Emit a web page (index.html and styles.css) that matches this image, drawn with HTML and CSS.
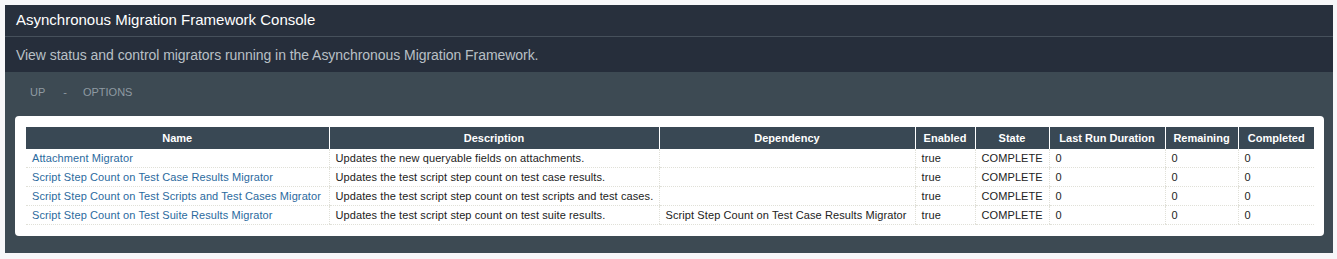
FILE: index.html
```html
<!DOCTYPE html>
<html>
<head>
<meta charset="utf-8">
<link rel="stylesheet" href="styles.css">
</head>
<body>
<div class="console">
  <div class="title-bar">Asynchronous Migration Framework Console</div>
  <div class="subtitle">View status and control migrators running in the Asynchronous Migration Framework.</div>
  <div class="section">
    <div class="nav"><span>UP</span><span class="sep">-</span><span>OPTIONS</span></div>
    <div class="panel">
      <table class="grid">
        <colgroup>
          <col style="width:303px"><col style="width:330px"><col style="width:256px"><col style="width:60px"><col style="width:74px"><col style="width:116px"><col style="width:73px"><col style="width:76px">
        </colgroup>
        <thead>
          <tr><th>Name</th><th>Description</th><th>Dependency</th><th>Enabled</th><th>State</th><th>Last Run Duration</th><th>Remaining</th><th>Completed</th></tr>
        </thead>
        <tbody>
          <tr><td><a>Attachment Migrator</a></td><td>Updates the new queryable fields on attachments.</td><td></td><td>true</td><td>COMPLETE</td><td>0</td><td>0</td><td>0</td></tr>
          <tr><td><a>Script Step Count on Test Case Results Migrator</a></td><td>Updates the test script step count on test case results.</td><td></td><td>true</td><td>COMPLETE</td><td>0</td><td>0</td><td>0</td></tr>
          <tr><td><a>Script Step Count on Test Scripts and Test Cases Migrator</a></td><td>Updates the test script step count on test scripts and test cases.</td><td></td><td>true</td><td>COMPLETE</td><td>0</td><td>0</td><td>0</td></tr>
          <tr><td><a>Script Step Count on Test Suite Results Migrator</a></td><td>Updates the test script step count on test suite results.</td><td>Script Step Count on Test Case Results Migrator</td><td>true</td><td>COMPLETE</td><td>0</td><td>0</td><td>0</td></tr>
        </tbody>
      </table>
    </div>
  </div>
</div>
</body>
</html>
```
FILE: styles.css
```css
html, body {
  margin: 0;
  padding: 0;
  background: #f7f7f9;
}
body {
  padding: 5px 4px 5px 5px;
  font-family: "Liberation Sans", Arial, sans-serif;
}
.console {
  width: 1328px;
  background: #3d4a53;
}
.title-bar {
  height: 32px;
  box-sizing: border-box;
  padding: 6px 0 0 11px;
  background: #28303d;
  color: #ffffff;
  font-size: 15px;
  border-bottom: 1px solid #46505b;
}
.subtitle {
  height: 35px;
  box-sizing: border-box;
  padding: 10px 0 0 11px;
  background: #262e3b;
  color: #b9c0c6;
  font-size: 14px;
  letter-spacing: -0.05px;
}
.section {
  padding: 12px 9px 17px 10px;
}
.nav {
  color: #8f9aa2;
  font-size: 11px;
  padding: 2px 0 0 15px;
  height: 30px;
  display: flex;
}
.nav .sep {
  margin: 0 16px 0 18px;
}
.panel {
  background: #ffffff;
  border-radius: 4px;
  padding: 11px 10px 11px 11px;
}
.grid {
  table-layout: fixed;
  border-collapse: collapse;
  width: 1288px;
  font-size: 11px;
  color: #222222;
}
.grid th {
  background: #394854;
  color: #ffffff;
  font-weight: bold;
  height: 22px;
  padding: 0;
  text-align: center;
  border-left: 1px solid #ffffff;
}
.grid th:first-child {
  border-left: none;
}
.grid td {
  height: 18px;
  padding: 0 0 0 6px;
  white-space: nowrap;
  overflow: hidden;
  letter-spacing: 0.1px;
  border-bottom: 1px dotted #e0e0d8;
  border-left: 1px dotted #e0e0d8;
}
.grid td:first-child {
  border-left: none;
}
.grid a {
  color: #2b6a9e;
  text-decoration: none;
}
```
